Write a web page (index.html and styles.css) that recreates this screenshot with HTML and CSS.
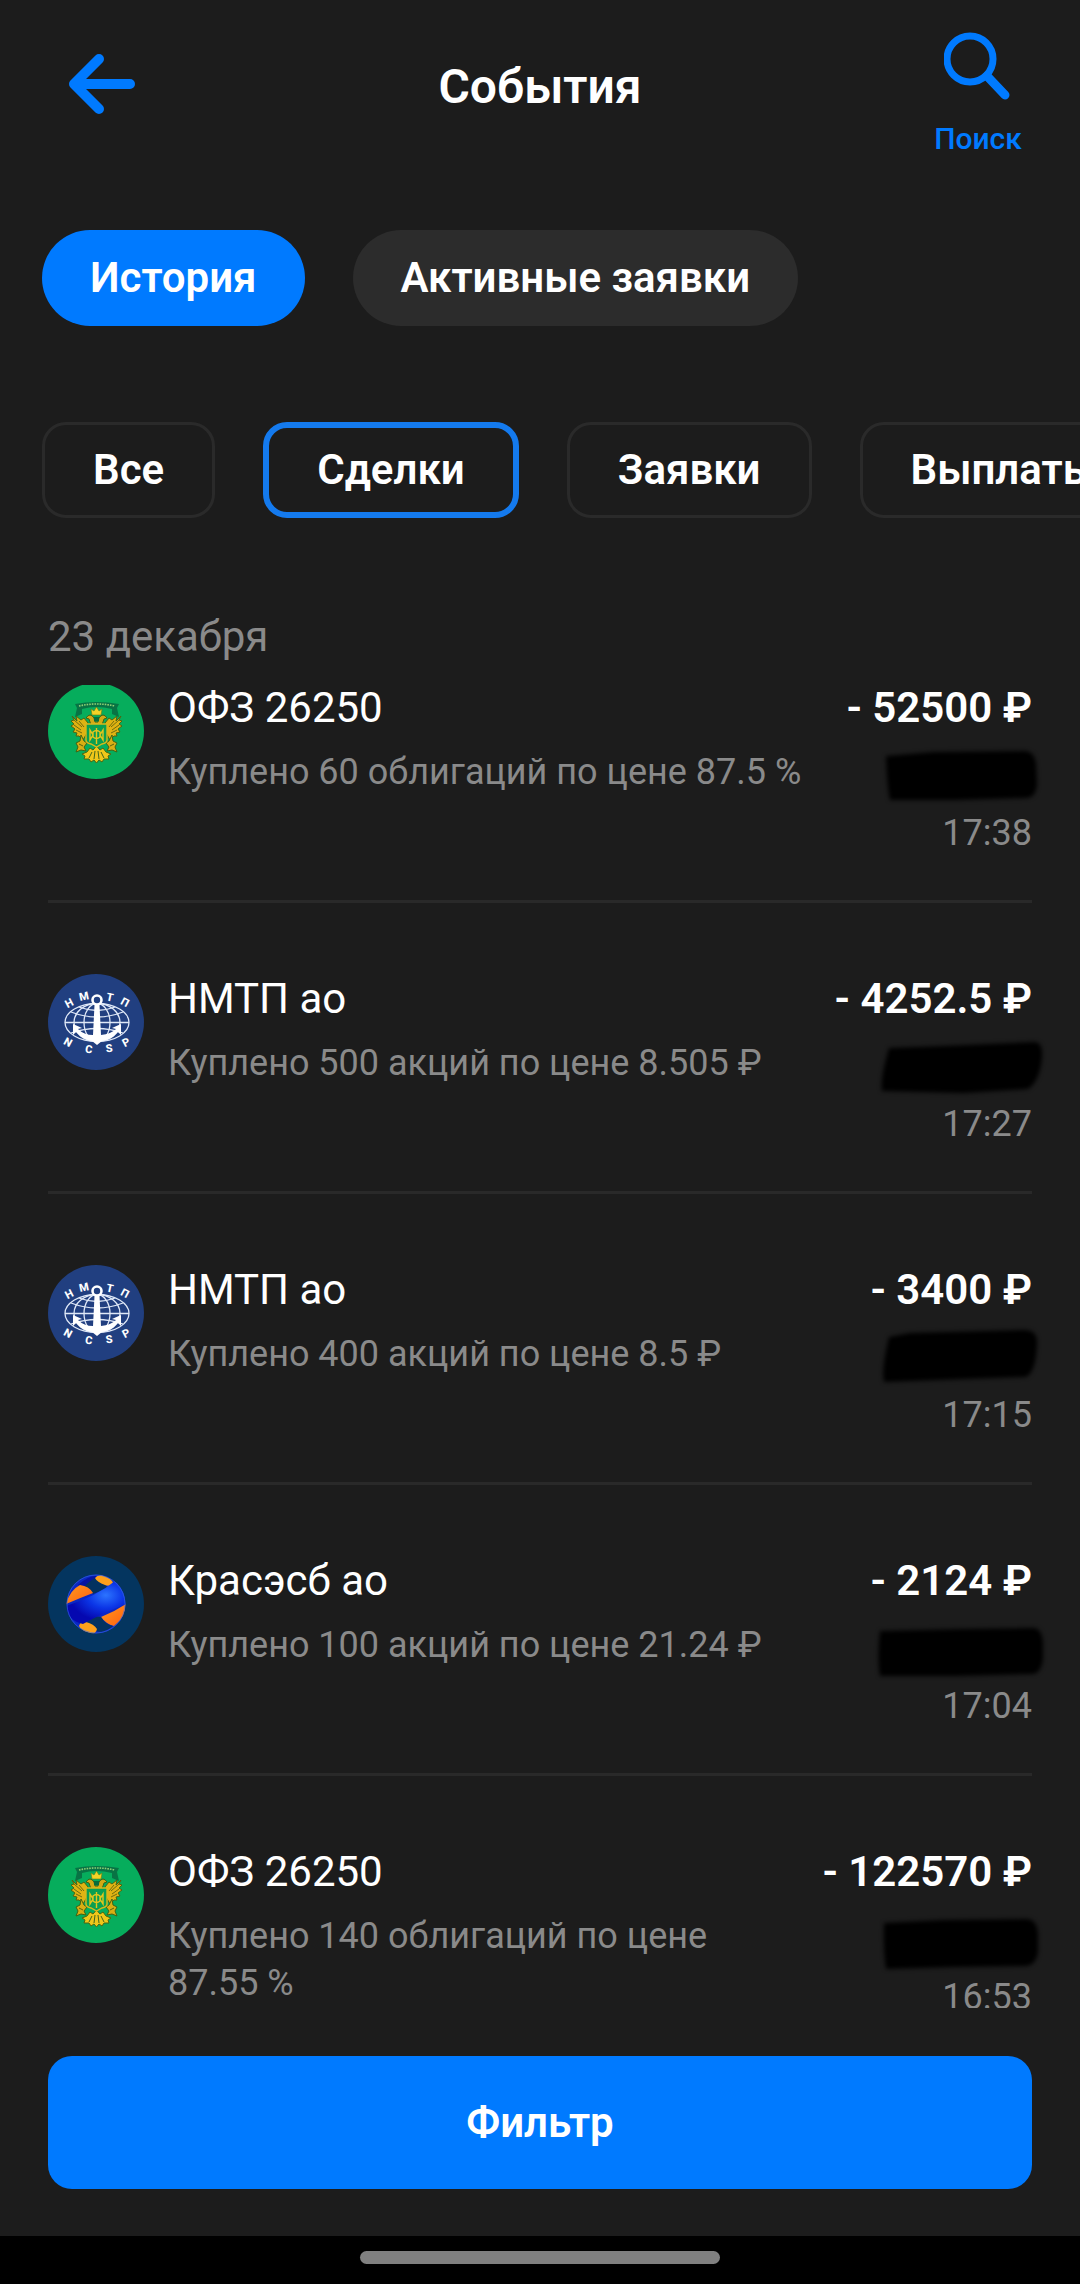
FILE: index.html
```
<!DOCTYPE html>
<html lang="ru">

<head>
    <meta charset="UTF-8">
    <meta name="viewport" content="width=device-width, initial-scale=1.0">
    <title>События</title>
    <link rel="stylesheet" href="styles.css">
</head>

<body>
    <!-- shared logos -->
    <svg class="sprite" aria-hidden="true">
        <symbol id="logo-ofz" viewBox="0 0 96 96">
            <circle cx="48" cy="48" r="48" fill="#06ad5c" />
            <path d="M27 21Q48 17 71 21L69 25L71 34L64 31V26Q48 22 34 26V31L27 34L29 25Z" fill="#087344" />
            <path d="M31 23Q48 19 67 23" fill="none" stroke="#8fce74" stroke-width="1.6" stroke-dasharray="1.6 1" />
            <!-- wings -->
            <g id="wing">
                <path d="M24 33L29 38L28 33L33 37L36 35L40 40L39 50L35 57L31 53L28 53L29 50L25 49L27 46L23 43L26 41L23 38L26 37Z" fill="#e0b312" stroke="#4c6512" stroke-width="1" />
                <path d="M26 37L34 44M26 42L33 47M28 47L34 50M31 38L36 44" stroke="#6f6c10" stroke-width="1" />
                <path d="M33 52L36 58L39 60L36 64L38 68L33 67L28 69L30 64L28 60L32 58Z" fill="#d8ae13" stroke="#3f6214" stroke-width="1" />
                <path d="M31 61L35 63" stroke="#57620f" stroke-width="1" />
            </g>
            <use href="#wing" transform="matrix(-1 0 0 1 97 0)" />
            <!-- heads and crown -->
            <path d="M38 35Q42 29 46 35L47 39H50L51 35Q55 29 59 35L56 36L54 42H43L41 36Z" fill="#d3a915" stroke="#3f6214" stroke-width="1" />
            <path d="M43 26L46 28L48.5 24L51 28L54 26L53 32H44Z" fill="#f3d327" stroke="#6d7a12" stroke-width=".6" />
            <path d="M46 34H51V38H46Z" fill="#086c3c" />
            <!-- tail -->
            <path d="M34 71L39 69L42 65L45 67L48.5 63L52 67L55 65L58 69L63 71L60 73L61 76L56 76L54 79L51 77L48.5 80L46 77L43 79L41 76L36 76L37 73Z" fill="#efc71a" stroke="#496713" stroke-width="1" />
            <path d="M44 69L41 75M47 68L46 76M50 68L51 76M53 69L56 75" stroke="#41651a" stroke-width="1" />
            <!-- shield -->
            <path d="M38 41H59V57Q59 60 54 61L48.5 64L43 61Q38 60 38 57Z" fill="#0a9f51" stroke="#d8b91b" stroke-width="1.4" />
            <path d="M48.5 45V61M45 49Q48.5 46 52 49V54Q48.5 57 45 54ZM42 47V57L45 52ZM55 47V57L52 52Z" fill="none" stroke="#e5c61c" stroke-width="1.4" />
        </symbol>

        <symbol id="logo-nmtp" viewBox="0 0 96 96">
            <circle cx="48" cy="48" r="48" fill="#213f80" />
            <g fill="none" stroke="#dfe8f7" stroke-width="1.3">
                <ellipse cx="49" cy="48.5" rx="32" ry="19" />
                <ellipse cx="49" cy="48.5" rx="23" ry="19" />
                <ellipse cx="49" cy="48.5" rx="13" ry="19" />
                <path d="M17 48.5H81M23 38Q49 48 75 38M23 59Q49 50 75 59M31 33Q49 40 67 33" />
            </g>
            <circle cx="49" cy="26" r="4.5" fill="#213f80" stroke="#fff" stroke-width="2.6" />
            <path d="M46.5 31H51.5L53 61Q63 60 68 55L64 54L73 50V61L70 58Q63 66 54 67L49 71L44 67Q35 66 28 58L25 61V50L34 54L30 55Q36 61 45 61Z" fill="#fff" />
        </symbol>

        <symbol id="logo-kras" viewBox="0 0 96 96">
            <defs>
                <radialGradient id="kras-band" cx=".66" cy=".33" r=".6">
                    <stop offset="0" stop-color="#2c74ff" />
                    <stop offset=".5" stop-color="#0b35e6" />
                    <stop offset="1" stop-color="#0508b0" />
                </radialGradient>
                <linearGradient id="kras-orange" x1="0" y1="0" x2="1" y2="1">
                    <stop offset="0" stop-color="#ff9a1f" />
                    <stop offset="1" stop-color="#ff5f0f" />
                </linearGradient>
                <clipPath id="kras-ball">
                    <circle cx="48" cy="48" r="29.5" />
                </clipPath>
            </defs>
            <circle cx="48" cy="48" r="48" fill="#04355f" />
            <g clip-path="url(#kras-ball)">
                <rect x="18" y="18" width="60" height="60" fill="#0a27c4" />
                <path d="M30 29Q40 20 48 20L51 29Q40 28 34 32Z" fill="#0613a0" />
                <path d="M36 31Q42 24 48 22Q54 25 60 32L45 38Q41 33 36 31Z" fill="#043260" />
                <path d="M47 22Q50 18 56 20Q65 23 65 28Q61 31 57 29Q49 26 47 22Z" fill="#ffa01c" />
                <path d="M18 48Q22 34 32 29Q41 30 45 37Q32 42 18 48Z" fill="url(#kras-orange)" />
                <path d="M53 61Q66 56 78 48Q78 61 66 70Q58 68 53 61Z" fill="url(#kras-orange)" />
                <path d="M35 66Q45 59 53 61Q58 69 65 70Q55 78 48 75Q41 69 35 66Z" fill="#043260" />
                <path d="M31 70Q33 64 38 66Q46 68 49 73Q48 78 43 78Q33 75 31 70Z" fill="#ffa01c" />
                <path d="M18 50Q49 40 67 25Q80 35 78 48Q55 57 35 68Q20 65 18 50Z" fill="url(#kras-band)" />
            </g>
            <circle cx="48" cy="48" r="29" fill="none" stroke="#3c6cdc" stroke-opacity=".6" stroke-width="1" />
        </symbol>
    </svg>

    <div id="app">
        <header class="header">
            <button class="icon-btn back" type="button" aria-label="Назад">
                <svg width="68" height="64" viewBox="0 0 68 64" fill="none" stroke="currentColor" stroke-width="10" stroke-linecap="round" stroke-linejoin="round">
                    <path d="M62 32H6M31 7L6 32L31 57" />
                </svg>
            </button>
            <h1 class="title">События</h1>
            <button class="icon-btn search" type="button">
                <svg width="68" height="70" viewBox="0 0 68 70" fill="none" stroke="currentColor">
                    <circle cx="26" cy="29" r="23" stroke-width="7" />
                    <path d="M43 46L61 65" stroke-width="9" stroke-linecap="round" />
                </svg>
                <span>Поиск</span>
            </button>
        </header>

        <nav class="tabs">
            <button class="tab active" type="button">История</button>
            <button class="tab" type="button">Активные заявки</button>
        </nav>

        <div class="chips">
            <button class="chip" type="button">Все</button>
            <button class="chip selected" type="button">Сделки</button>
            <button class="chip" type="button">Заявки</button>
            <button class="chip" type="button">Выплаты</button>
        </div>

        <h2 class="day">23 декабря</h2>

        <main class="events">
            <ul class="event-list">
                <li class="event">
                    <svg class="logo" aria-hidden="true"><use href="#logo-ofz" /></svg>
                    <div class="info">
                        <div class="name">ОФЗ 26250</div>
                        <div class="note">Куплено 60 облигаций по цене 87.5 %</div>
                    </div>
                    <div class="sum">
                        <div class="amount">- 52500 ₽</div>
                        <svg class="hidden-sum" viewBox="0 0 172 60" aria-hidden="true">
                            <path d="M12 10L60 6L152 5Q160 6 162 17L163 38Q162 51 153 52L80 54L16 54Q13 40 12 10Z" />
                        </svg>
                        <time class="time">17:38</time>
                    </div>
                </li>

                <li class="event">
                    <svg class="logo" viewBox="0 0 96 96" aria-hidden="true">
                        <use href="#logo-nmtp" />
                        <g class="logo-letters">
                            <text x="21" y="33" transform="rotate(-28 21 29)">Н</text>
                            <text x="36" y="26" transform="rotate(-12 36 22)">М</text>
                            <text x="62" y="27" transform="rotate(12 62 23)">Т</text>
                            <text x="77" y="32" transform="rotate(28 77 28)">П</text>
                            <text x="20" y="72" transform="rotate(28 20 68)">N</text>
                            <text x="41" y="79" transform="rotate(8 41 75)">C</text>
                            <text x="61" y="78" transform="rotate(-8 61 74)">S</text>
                            <text x="78" y="72" transform="rotate(-28 78 68)">P</text>
                        </g>
                    </svg>
                    <div class="info">
                        <div class="name">НМТП ао</div>
                        <div class="note">Куплено 500 акций по цене 8.505 ₽</div>
                    </div>
                    <div class="sum">
                        <div class="amount">- 4252.5 ₽</div>
                        <svg class="hidden-sum" viewBox="0 0 172 60" aria-hidden="true">
                            <path d="M15 11L70 9L160 5Q169 5 168 20Q166 44 154 52L90 56L8 54Q6 42 15 11Z" />
                        </svg>
                        <time class="time">17:27</time>
                    </div>
                </li>

                <li class="event">
                    <svg class="logo" viewBox="0 0 96 96" aria-hidden="true">
                        <use href="#logo-nmtp" />
                        <g class="logo-letters">
                            <text x="21" y="33" transform="rotate(-28 21 29)">Н</text>
                            <text x="36" y="26" transform="rotate(-12 36 22)">М</text>
                            <text x="62" y="27" transform="rotate(12 62 23)">Т</text>
                            <text x="77" y="32" transform="rotate(28 77 28)">П</text>
                            <text x="20" y="72" transform="rotate(28 20 68)">N</text>
                            <text x="41" y="79" transform="rotate(8 41 75)">C</text>
                            <text x="61" y="78" transform="rotate(-8 61 74)">S</text>
                            <text x="78" y="72" transform="rotate(-28 78 68)">P</text>
                        </g>
                    </svg>
                    <div class="info">
                        <div class="name">НМТП ао</div>
                        <div class="note">Куплено 400 акций по цене 8.5 ₽</div>
                    </div>
                    <div class="sum">
                        <div class="amount">- 3400 ₽</div>
                        <svg class="hidden-sum" viewBox="0 0 172 60" aria-hidden="true">
                            <path d="M15 9L36 5L150 2Q164 2 163 16Q162 44 152 49L90 51L10 54Q7 42 15 9Z" />
                        </svg>
                        <time class="time">17:15</time>
                    </div>
                </li>

                <li class="event">
                    <svg class="logo" aria-hidden="true"><use href="#logo-kras" /></svg>
                    <div class="info">
                        <div class="name">Красэсб ао</div>
                        <div class="note">Куплено 100 акций по цене 21.24 ₽</div>
                    </div>
                    <div class="sum">
                        <div class="amount">- 2124 ₽</div>
                        <svg class="hidden-sum" viewBox="0 0 172 60" aria-hidden="true">
                            <path d="M6 12L90 10L160 9Q168 10 169 24L169 40Q167 54 159 55L80 57L6 57Q3 40 6 12Z" />
                        </svg>
                        <time class="time">17:04</time>
                    </div>
                </li>

                <li class="event">
                    <svg class="logo" aria-hidden="true"><use href="#logo-ofz" /></svg>
                    <div class="info">
                        <div class="name">ОФЗ 26250</div>
                        <div class="note">Куплено 140 облигаций по цене 87.55 %</div>
                    </div>
                    <div class="sum">
                        <div class="amount">- 122570 ₽</div>
                        <svg class="hidden-sum" viewBox="0 0 172 60" aria-hidden="true">
                            <path d="M10 13L70 10L152 9Q163 9 164 24L164 42Q162 55 152 56L80 57L12 59Q9 40 10 13Z" />
                        </svg>
                        <time class="time">16:53</time>
                    </div>
                </li>
            </ul>
        </main>

        <footer class="footer">
            <button class="filter-btn" type="button">Фильтр</button>
        </footer>

        <div class="system-bar">
            <div class="home-pill"></div>
        </div>
    </div>
</body>

</html>
```
FILE: styles.css
```
* {
    box-sizing: border-box;
}

body {
    margin: 0;
    background-color: #1c1c1c;
    color: white;
    font-family: Roboto, "Noto Sans", sans-serif;
    font-size: 42px;
    line-height: 50px;
}

button {
    margin: 0;
    padding: 0;
    border: none;
    background: none;
    color: inherit;
    font: inherit;
    font-weight: 600;
    cursor: pointer;
}

.sprite {
    position: absolute;
    width: 0;
    height: 0;
}

#app {
    display: flex;
    flex-direction: column;
    height: 100vh;
    overflow: hidden;
}

/*----- header -----*/
.header {
    display: grid;
    grid-template-columns: 1fr auto 1fr;
    align-items: start;
    padding: 30px 56px 72px;
}

.icon-btn {
    display: flex;
    flex-direction: column;
    align-items: center;
    width: 92px;
    color: #007aff;
}

.back {
    justify-content: center;
    height: 108px;
}

.title {
    margin: 0;
    font-size: 48px;
    font-weight: 600;
    line-height: 114px;
}

.search {
    justify-self: end;
    gap: 20px;
    font-size: 30px;
    font-weight: 500;
    line-height: 38px;
}

/*----- tabs and filter chips -----*/
.tabs,
.chips {
    display: flex;
    flex-shrink: 0;
    gap: 48px;
    padding: 0 42px;
    overflow: hidden;
}

.tab {
    height: 96px;
    padding: 0 48px;
    border-radius: 48px;
    background-color: #2c2c2c;
}

.tab.active {
    background-color: #007aff;
}

.chips {
    margin-top: 96px;
}

.chip {
    flex-shrink: 0;
    height: 96px;
    padding: 0 48px;
    border: 3px solid #2a2a2a;
    border-radius: 24px;
}

.chip.selected {
    border: 6px solid #147aee;
}

/*----- list of events -----*/
.day {
    margin: 0;
    padding: 94px 48px 23px;
    color: #8a8a8a;
    font-size: 42px;
    font-weight: 400;
}

.events {
    flex: 1;
    min-height: 0;
    overflow: hidden;
}

.event-list {
    margin: -2px 0 0;
    padding: 0 48px;
    list-style: none;
}

.event {
    display: flex;
    gap: 24px;
    padding: 71px 0 43px;
    border-bottom: 3px solid #292929;
}

.event:first-child {
    padding-top: 0;
}

.logo {
    flex-shrink: 0;
    width: 96px;
    height: 96px;
}

.logo-letters {
    fill: white;
    font-size: 11px;
    font-weight: 800;
    text-anchor: middle;
}

.info {
    flex: 1;
}

.note {
    margin-top: 16px;
    color: #8a8a8a;
    font-size: 36px;
    line-height: 47px;
}

.sum {
    display: flex;
    flex-direction: column;
    align-items: flex-end;
}

.amount {
    font-weight: 600;
    white-space: nowrap;
}

/* smear over the balance, reaches a little past the column */
.hidden-sum {
    width: 172px;
    height: 60px;
    margin: 13px -14px 3px 0;
    filter: blur(2px);
}

.time {
    color: #8a8a8a;
    font-size: 36px;
    line-height: 48px;
}

/*----- bottom -----*/
.footer {
    padding: 48px 48px 47px;
}

.filter-btn {
    display: block;
    width: 100%;
    height: 133px;
    border-radius: 24px;
    background-color: #007aff;
}

.system-bar {
    display: flex;
    flex-shrink: 0;
    align-items: center;
    justify-content: center;
    height: 48px;
    padding-bottom: 5px;
    background-color: black;
}

.home-pill {
    width: 33.33%;
    height: 13px;
    border-radius: 7px;
    background-color: #808080;
}
```
